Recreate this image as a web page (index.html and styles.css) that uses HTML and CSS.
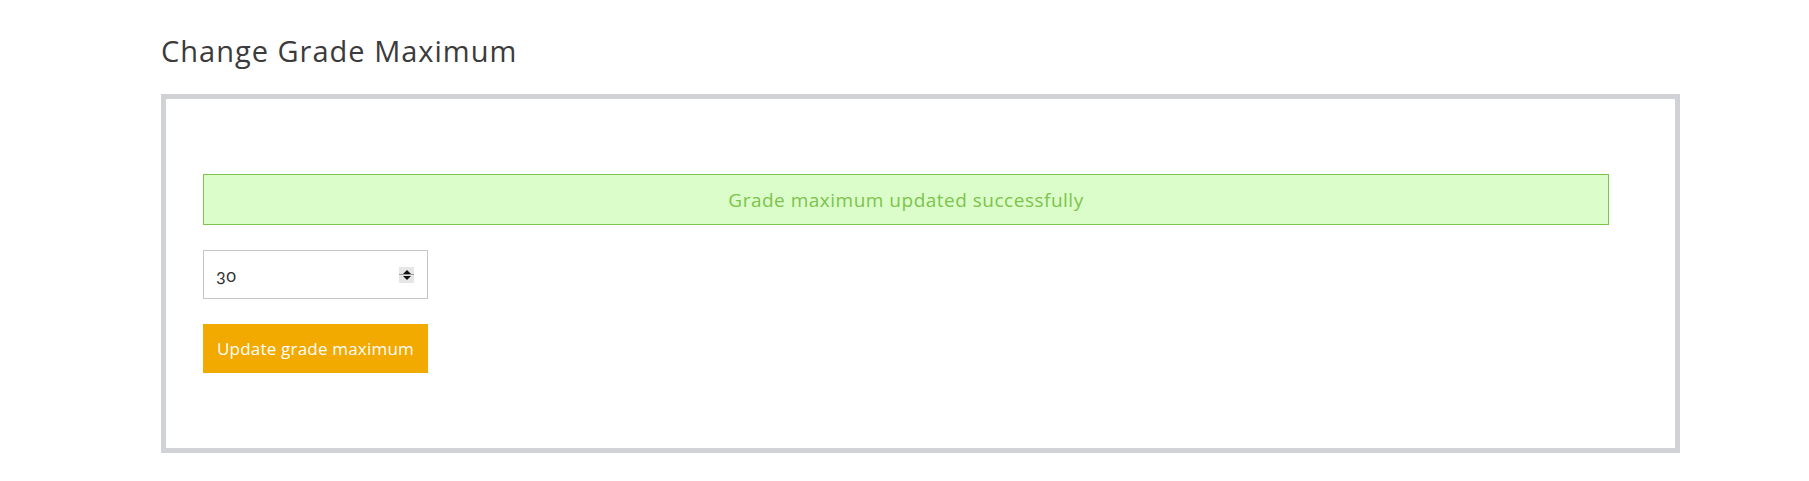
FILE: index.html
```html
<!DOCTYPE html>
<html>
<head>
<meta charset="utf-8">
<link rel="stylesheet" href="styles.css">
</head>
<body>
<div class="page">
  <h2 class="title">Change Grade Maximum</h2>
  <div class="panel">
    <div class="alert">Grade maximum updated successfully</div>
    <div class="field">
      <span class="value">30</span>
      <span class="spinner">
        <span class="arrow up"></span>
        <span class="sep"></span>
        <span class="arrow down"></span>
      </span>
    </div>
    <button class="btn">Update grade maximum</button>
  </div>
</div>
</body>
</html>
```
FILE: styles.css
```css
html, body {
  margin: 0;
  padding: 0;
  background: #ffffff;
}
body {
  font-family: "Open Sans", "Liberation Sans", sans-serif;
}
.page {
  padding: 0 129px 0 161px;
}
.title {
  margin: 0;
  padding-top: 36px;
  height: 94px;
  box-sizing: border-box;
  font-size: 29px;
  line-height: 30px;
  letter-spacing: 1px;
  font-weight: 400;
  color: #3b3b3b;
}
.panel {
  border: 5px solid #d0d2d6;
  padding: 75px 66px 75px 37px;
  display: flex;
  flex-direction: column;
  align-items: flex-start;
}
.alert {
  align-self: stretch;
  height: 51px;
  box-sizing: border-box;
  border: 1px solid #7cc44b;
  background: #dbfdca;
  color: #7cc44b;
  font-size: 19px;
  letter-spacing: 0.5px;
  display: flex;
  align-items: center;
  justify-content: center;
  margin-bottom: 25px;
}
.field {
  width: 225px;
  height: 49px;
  box-sizing: border-box;
  border: 1px solid #c4c4c4;
  display: flex;
  align-items: center;
  justify-content: space-between;
  padding: 0 13px 0 12px;
  margin-bottom: 25px;
  color: #333;
  font-size: 16px;
}
.value {
  font-family: "Lato", sans-serif;
  font-feature-settings: "onum" 1;
  font-size: 18px;
  letter-spacing: 0.5px;
}
.spinner {
  width: 15px;
  height: 16px;
  background: #e6e6e6;
  display: flex;
  flex-direction: column;
  align-items: center;
  justify-content: space-between;
  padding: 3px 0;
  box-sizing: border-box;
}
.arrow {
  width: 0;
  height: 0;
  border-left: 4px solid transparent;
  border-right: 4px solid transparent;
}
.arrow.up { border-bottom: 4px solid #111; }
.arrow.down { border-top: 4px solid #111; }
.sep {
  width: 15px;
  height: 1px;
  background: #999;
}
.btn {
  width: 225px;
  height: 49px;
  border: 0;
  background: #f2a900;
  color: #ffffff;
  font-family: "Open Sans", "Liberation Sans", sans-serif;
  font-size: 17px;
  letter-spacing: 0.2px;
  padding: 0;
  text-align: center;
}
```
